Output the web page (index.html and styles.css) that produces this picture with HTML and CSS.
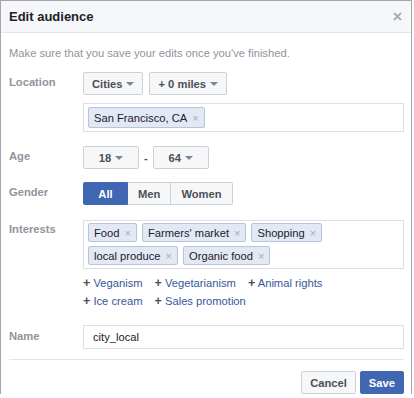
FILE: index.html
```html
<!doctype html>
<html lang="en">
  <head>
    <meta charset="UTF-8" />
    <meta name="viewport" content="width=device-width, initial-scale=1.0" />
    <title>Edit audience</title>
    <link rel="stylesheet" href="styles.css">
  </head>
  <body>
    <div class="dialog">
      <div class="dialog-header">
        <h2>Edit audience</h2>
        <svg class="close" width="9" height="9" viewBox="0 0 9 9">
          <path d="M1 1L8 8M8 1L1 8" stroke="#a8adb4" stroke-width="1.8" />
        </svg>
      </div>

      <div class="dialog-body">
        <p class="intro">Make sure that you save your edits once you've finished.</p>

        <div class="row row-location">
          <div class="label">Location</div>
          <div class="controls">
            <button class="select">Cities <span class="caret"></span></button>
            <button class="select">+ 0 miles <span class="caret"></span></button>
          </div>
        </div>

        <div class="row row-city">
          <div class="label"></div>
          <div class="token-box city-box">
            <span class="token">San Francisco, CA <span class="remove">×</span></span>
          </div>
        </div>

        <div class="row row-age">
          <div class="label">Age</div>
          <div class="controls">
            <button class="select age">18 <span class="caret"></span></button>
            <span class="dash">-</span>
            <button class="select age">64 <span class="caret"></span></button>
          </div>
        </div>

        <div class="row row-gender">
          <div class="label">Gender</div>
          <div class="segmented">
            <button class="seg active">All</button>
            <button class="seg">Men</button>
            <button class="seg">Women</button>
          </div>
        </div>

        <div class="row row-interests">
          <div class="label">Interests</div>
          <div class="interests">
            <div class="token-box">
              <span class="token">Food <span class="remove">×</span></span>
              <span class="token">Farmers' market <span class="remove">×</span></span>
              <span class="token">Shopping <span class="remove">×</span></span>
              <span class="token">local produce <span class="remove">×</span></span>
              <span class="token">Organic food <span class="remove">×</span></span>
            </div>
            <div class="suggestions">
              <div class="suggest-row">
                <a class="suggest" href="#"><b>+</b> Veganism</a>
                <a class="suggest" href="#"><b>+</b> Vegetarianism</a>
                <a class="suggest" href="#"><b>+</b> Animal rights</a>
              </div>
              <div class="suggest-row">
                <a class="suggest" href="#"><b>+</b> Ice cream</a>
                <a class="suggest" href="#"><b>+</b> Sales promotion</a>
              </div>
            </div>
          </div>
        </div>

        <div class="row row-name">
          <div class="label">Name</div>
          <input class="text-input" type="text" value="city_local" />
        </div>

        <div class="dialog-footer">
          <button class="btn">Cancel</button>
          <button class="btn btn-primary">Save</button>
        </div>
      </div>
    </div>
  </body>
</html>
```

FILE: styles.css
```css
body {
  font-family: "Liberation Sans", Arial, sans-serif;
  font-size: 11.2px;
  margin: 0;
  background-color: white;
  color: #1d2129;
}

.dialog {
  width: 410px;
  border: 1px solid #a4a7ad;
  border-bottom: none;
  background-color: white;
}

.dialog-header {
  display: flex;
  align-items: center;
  justify-content: space-between;
  height: 31px;
  padding: 0 9px 0 8px;
  background-color: #f6f7f9;
  border-bottom: 1px solid #e5e5e5;
}

.dialog-header h2 {
  margin: 0;
  font-size: 13px;
  font-weight: bold;
  color: #1d2129;
}

.dialog-body {
  padding: 12px 7px 0 8px;
}

.intro {
  margin: 0;
  line-height: 16px;
  color: #90949c;
}

.row {
  display: flex;
  align-items: flex-start;
}

.label {
  flex: 0 0 74px;
  font-weight: bold;
  color: #90949c;
  line-height: 18px;
}

.row-location {
  margin-top: 11px;
}

.row-city {
  margin-top: 8px;
}

.row-age {
  margin-top: 14px;
}

.row-gender {
  margin-top: 13px;
}

.row-interests {
  margin-top: 15px;
}

.row-name {
  margin-top: 15px;
}

.row-location .label,
.row-age .label,
.row-gender .label {
  padding-top: 1px;
}

.row-name .label {
  padding-top: 2px;
}

.controls {
  display: flex;
  align-items: center;
  gap: 6px;
}

button {
  font-family: "Liberation Sans", Arial, sans-serif;
  font-size: 11.2px;
  font-weight: bold;
  cursor: pointer;
}

.select {
  display: flex;
  align-items: center;
  gap: 4px;
  height: 23px;
  padding: 0 8px;
  border: 1px solid #ced0d4;
  border-radius: 2px;
  background-color: #f6f7f9;
  color: #4b4f56;
}

.select.age {
  width: 56px;
  justify-content: center;
}

.caret {
  width: 0;
  height: 0;
  border-left: 4px solid transparent;
  border-right: 4px solid transparent;
  border-top: 4px solid #7f848b;
}

.dash {
  font-weight: bold;
  color: #4b4f56;
  margin: 0 -1px;
}

.segmented {
  display: flex;
}

.seg {
  height: 23px;
  padding: 0 10px;
  border: 1px solid #ced0d4;
  border-left: none;
  background-color: #f6f7f9;
  color: #4b4f56;
}

.seg:first-child {
  border-left: 1px solid #ced0d4;
  border-radius: 2px 0 0 2px;
}

.seg:last-child {
  border-radius: 0 2px 2px 0;
}

.seg.active {
  width: 45px;
  background-color: #4267b2;
  border-color: #4267b2;
  color: white;
}

.token-box {
  flex: 1;
  display: flex;
  flex-wrap: wrap;
  align-content: flex-start;
  gap: 4px 5px;
  padding: 2px 4px 3px 4px;
  border: 1px solid #dddfe2;
}

.city-box {
  padding: 3px 4px;
}

.token {
  display: inline-flex;
  align-items: center;
  gap: 5px;
  height: 17px;
  padding: 0 5px;
  background-color: #e2e8f4;
  border: 1px solid #b7c4dd;
  border-radius: 2px;
  color: #1d2129;
}

.city-box .token {
  height: 19px;
}

.remove {
  color: #a8adb4;
  font-size: 11px;
}

.interests {
  flex: 1;
}

.suggestions {
  margin-top: 5px;
  line-height: 18px;
}

.suggest-row {
  display: flex;
  gap: 12px;
}

.suggest {
  color: #365899;
  text-decoration: none;
}

.suggest b {
  font-size: 12.5px;
  color: #4b4f56;
}

.text-input {
  flex: 1;
  height: 24px;
  box-sizing: border-box;
  padding: 0 9px;
  border: 1px solid #dddfe2;
  font-family: "Liberation Sans", Arial, sans-serif;
  font-size: 11.2px;
  color: #1d2129;
}

.dialog-footer {
  display: flex;
  justify-content: flex-end;
  gap: 4px;
  margin-top: 10px;
  padding-top: 11px;
  border-top: 1px solid #e5e5e5;
}

.btn {
  height: 23px;
  padding: 0 8px;
  border: 1px solid #ced0d4;
  border-radius: 2px;
  background-color: #f6f7f9;
  color: #4b4f56;
}

.btn-primary {
  background-color: #4267b2;
  border-color: #4267b2;
  color: white;
}
```
